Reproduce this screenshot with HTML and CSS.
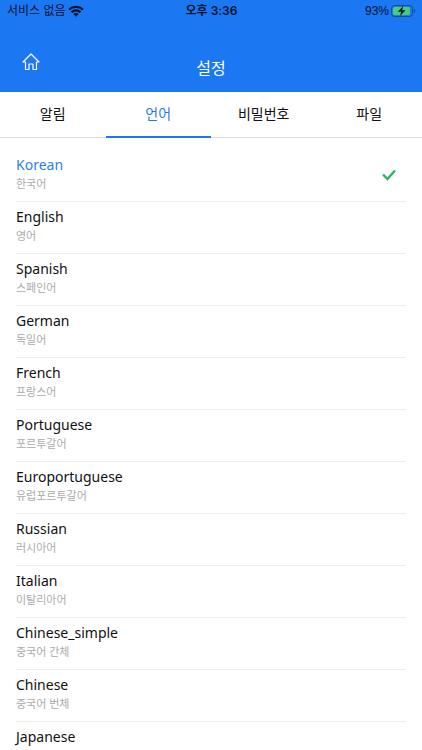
FILE: index.html
```html
<!DOCTYPE html>
<html lang="ko">
<head>
<meta charset="utf-8">
<meta name="viewport" content="width=device-width, initial-scale=1">
<title>설정</title>
<link rel="stylesheet" href="styles.css">
</head>
<body>
<div class="app">
  <header class="top">
    <div class="status">
      <div class="status-left">
        <span>서비스 없음</span>
        <svg class="wifi" viewBox="0 0 15 11" aria-hidden="true">
          <path d="M1 4.2a9.4 9.4 0 0 1 13 0M3.3 6.6a6 6 0 0 1 8.4 0" fill="none" stroke="currentColor" stroke-width="2"/>
          <path d="M5 8.3a3.6 3.6 0 0 1 5 0L7.500 10.900z" fill="currentColor"/>
        </svg>
      </div>
      <span class="time">오후 3:36</span>
      <div class="status-right">
        <span>93%</span>
        <svg class="battery" viewBox="0 0 25 12" aria-hidden="true">
          <rect x=".5" y=".5" width="21" height="11" rx="3" fill="none" stroke="#124a9c"/>
          <rect x="2" y="2" width="17" height="8" rx="1.500" fill="#4ccb70"/>
          <path d="M23 4v4c1.700-.6 1.700-3.400 0-4z" fill="#124a9c"/>
          <path d="M12.200 1L6.800 6.700h3.400L9 11l5.600-5.800h-3.500z" fill="#04142c"/>
        </svg>
      </div>
    </div>
    <div class="titlebar">
      <button class="home" type="button" aria-label="홈">
        <svg viewBox="0 0 18 18" aria-hidden="true">
          <path d="M1 9L9 1l8 8h-2.500v7.500h-3.500v-5.500h-4v5.500H3.500V9z" fill="none" stroke="currentColor" stroke-width="1.200" stroke-linejoin="round"/>
        </svg>
      </button>
      <h1>설정</h1>
    </div>
  </header>
  <nav class="tabs">
    <button class="tab" type="button">알림</button>
    <button class="tab active" type="button">언어</button>
    <button class="tab" type="button">비밀번호</button>
    <button class="tab" type="button">파일</button>
  </nav>
  <main class="languages">
    <button class="language selected" type="button" aria-pressed="true">
      <span class="names"><span class="name">Korean</span><span class="local">한국어</span></span>
      <svg class="check" viewBox="0 0 14 12" aria-hidden="true"><path d="M1 5.500l4.500 4.500L13 1.500" fill="none" stroke="currentColor" stroke-width="2.400"/></svg>
    </button>
    <button class="language" type="button"><span class="names"><span class="name">English</span><span class="local">영어</span></span></button>
    <button class="language" type="button"><span class="names"><span class="name">Spanish</span><span class="local">스페인어</span></span></button>
    <button class="language" type="button"><span class="names"><span class="name">German</span><span class="local">독일어</span></span></button>
    <button class="language" type="button"><span class="names"><span class="name">French</span><span class="local">프랑스어</span></span></button>
    <button class="language" type="button"><span class="names"><span class="name">Portuguese</span><span class="local">포르투갈어</span></span></button>
    <button class="language" type="button"><span class="names"><span class="name">Europortuguese</span><span class="local">유럽포르투갈어</span></span></button>
    <button class="language" type="button"><span class="names"><span class="name">Russian</span><span class="local">러시아어</span></span></button>
    <button class="language" type="button"><span class="names"><span class="name">Italian</span><span class="local">이탈리아어</span></span></button>
    <button class="language" type="button"><span class="names"><span class="name">Chinese_simple</span><span class="local">중국어 간체</span></span></button>
    <button class="language" type="button"><span class="names"><span class="name">Chinese</span><span class="local">중국어 번체</span></span></button>
    <button class="language" type="button"><span class="names"><span class="name">Japanese</span></span></button>
  </main>
</div>
</body>
</html>
```
FILE: styles.css
```css
* {
  box-sizing: border-box;
}

body {
  margin: 0;
  background: #fff;
  color: #111;
  font-family: "Noto Sans", "Noto Sans CJK KR", sans-serif;
}

button {
  padding: 0;
  border: 0;
  background: none;
  color: inherit;
  font: inherit;
}

svg {
  display: block;
}

.app {
  display: flex;
  flex-direction: column;
  height: 100vh;
}

.top {
  flex: none;
  background: #1c77f3;
}

.status {
  display: grid;
  grid-template-columns: 1fr auto 1fr;
  align-items: center;
  height: 22px;
  padding: 0 6px 0 7px;
  color: #04142c;
  font-family: "Liberation Sans", "Noto Sans CJK KR", sans-serif;
  font-size: 12px;
  line-height: 22px;
}

.status-left,
.status-right {
  display: flex;
  align-items: center;
  gap: 2px;
}

.status-right {
  justify-content: flex-end;
}

.time {
  font-family: Inter, "Noto Sans CJK KR", sans-serif;
  font-weight: 600;
}

.wifi {
  width: 16px;
  height: 12px;
}

.battery {
  width: 25px;
  height: 12px;
}

.titlebar {
  display: grid;
  grid-template-columns: 1fr auto 1fr;
  height: 70px;
  padding: 0 20px;
  color: #fff;
}

.home {
  justify-self: start;
  align-self: start;
  padding: 31px 2px 0;
}

.home svg {
  width: 18px;
  height: 18px;
}

h1 {
  margin: 0;
  padding-top: 34px;
  font-size: 16px;
  font-weight: 400;
  line-height: 24px;
}

.tabs {
  display: grid;
  grid-template-columns: repeat(4, 1fr);
  flex: none;
  height: 46px;
  box-shadow: inset 0 -1px #ddd;
}

.tab {
  padding-bottom: 2px;
  border-bottom: 2px solid transparent;
  font-size: 14px;
}

.tab.active {
  border-color: #1c77f3;
  color: #1c77f3;
}

.languages {
  flex: 1;
  min-height: 0;
  padding: 12px 16px 0;
  overflow-y: auto;
  scrollbar-width: none;
}

.language {
  display: flex;
  align-items: flex-start;
  justify-content: space-between;
  width: 100%;
  height: 52px;
  padding-top: 5px;
  border-bottom: 1px solid #eee;
  text-align: left;
}

.names {
  display: flex;
  flex-direction: column;
}

.name {
  font-size: 14px;
  line-height: 20px;
}

.local {
  color: #aaa;
  font-size: 11px;
  line-height: 18px;
}

.selected .name {
  color: #2b7fe8;
}

.check {
  width: 14px;
  height: 12px;
  margin: 14px 10px 0 0;
  color: #2bb36b;
}
```
